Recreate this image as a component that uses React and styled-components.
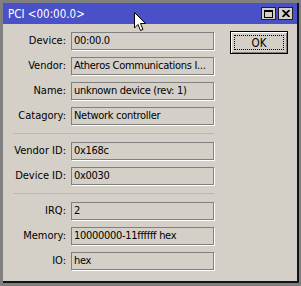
import React from 'react';
import styled, { createGlobalStyle } from 'styled-components';

const GlobalStyle = createGlobalStyle`
  html, body {
    margin: 0;
    padding: 0;
    background: #808080;
  }
  body {
    width: 301px;
    height: 286px;
    overflow: hidden;
    font-family: "DejaVu Sans Condensed", "DejaVu Sans", sans-serif;
    font-size: 11px;
  }
`;

const Desktop = styled.div`
  position: relative;
  width: 301px;
  height: 286px;
  padding: 3px 0 0 3px;
  box-sizing: border-box;
`;

const Window = styled.div`
  width: 296px;
  height: 280px;
  box-sizing: border-box;
  background: #d4d0c8;
  border-right: 2px solid #141414;
  border-bottom: 2px solid #141414;
  display: flex;
  flex-direction: column;
`;

const TitleBar = styled.div`
  height: 21px;
  flex: 0 0 auto;
  background: #4a50c8;
  color: #fff;
  display: flex;
  align-items: center;
  padding: 0 4px 0 5px;
  font-size: 11.5px;
`;

const TitleText = styled.span`
  flex: 1;
`;

const TitleButtons = styled.div`
  display: flex;
  gap: 2px;
`;

const TitleButton = styled.div`
  width: 15px;
  height: 13px;
  box-sizing: border-box;
  background: #d4d0c8;
  border: 1px solid #202020;
  display: flex;
  align-items: center;
  justify-content: center;
`;

const Content = styled.div`
  display: flex;
  align-items: flex-start;
  padding: 8px 0 0 10px;
`;

const Form = styled.div`
  width: 201px;
  display: flex;
  flex-direction: column;
  gap: 7px;
`;

const Row = styled.div`
  display: grid;
  grid-template-columns: 53px 143px;
  column-gap: 5px;
  height: 18px;
`;

const Label = styled.div`
  text-align: right;
  line-height: 18px;
  color: #000;
  white-space: nowrap;
`;

const Field = styled.div`
  height: 18px;
  box-sizing: border-box;
  border: 1px solid #808080;
  box-shadow: 1px 1px 0 #fff;
  padding: 0 2px;
  line-height: 16px;
  letter-spacing: -0.3px;
  color: #000;
  white-space: nowrap;
  overflow: hidden;
`;

const Separator = styled.div`
  margin: 1px 0;
  border-top: 1px solid #bcb8b0;
`;

const OkButton = styled.button`
  position: relative;
  margin: -1px 0 0 16px;
  width: 58px;
  height: 23px;
  box-sizing: border-box;
  background: #d4d0c8;
  border: 1px solid #000;
  box-shadow: inset 1px 1px 0 #fff, inset -1px -1px 0 #808080;
  font-family: inherit;
  font-size: 11.5px;
  color: #000;
  padding: 0;
  &::after {
    content: '';
    position: absolute;
    inset: 3px;
    border: 1px dotted #000;
  }
`;

const Cursor = styled.svg`
  position: absolute;
  left: 134px;
  top: 12px;
`;

const groups = [
  [
    ['Device:', '00:00.0'],
    ['Vendor:', 'Atheros Communications I...'],
    ['Name:', 'unknown device (rev: 1)'],
    ['Catagory:', 'Network controller'],
  ],
  [
    ['Vendor ID:', '0x168c'],
    ['Device ID:', '0x0030'],
  ],
  [
    ['IRQ:', '2'],
    ['Memory:', '10000000-11ffffff hex'],
    ['IO:', 'hex'],
  ],
];

export default function App() {
  return (
    <>
      <GlobalStyle />
      <Desktop>
        <Window>
          <TitleBar>
            <TitleText>PCI &lt;00:00.0&gt;</TitleText>
            <TitleButtons>
              <TitleButton>
                <svg width="9" height="8" viewBox="0 0 9 8">
                  <rect x="0.5" y="0.5" width="8" height="7" fill="none" stroke="#000" />
                  <rect x="0" y="0" width="9" height="2" fill="#000" />
                </svg>
              </TitleButton>
              <TitleButton>
                <svg width="8" height="7" viewBox="0 0 8 7">
                  <path d="M0.5 0 L7.5 7 M7.5 0 L0.5 7" stroke="#000" strokeWidth="1.8" />
                </svg>
              </TitleButton>
            </TitleButtons>
          </TitleBar>
          <Content>
            <Form>
              {groups.map((group, gi) => (
                <React.Fragment key={gi}>
                  {gi > 0 && <Separator />}
                  {group.map(([label, value]) => (
                    <Row key={label}>
                      <Label>{label}</Label>
                      <Field>{value}</Field>
                    </Row>
                  ))}
                </React.Fragment>
              ))}
            </Form>
            <OkButton>OK</OkButton>
          </Content>
        </Window>
        <Cursor width="13" height="20" viewBox="0 0 13 20">
          <path
            d="M0.5 0.5 L0.5 16 L4 12.5 L6.5 18.5 L9 17.5 L6.5 11.5 L11.5 11.5 Z"
            fill="#fff"
            stroke="#000"
            strokeWidth="1"
            strokeLinejoin="miter"
          />
        </Cursor>
      </Desktop>
    </>
  );
}
